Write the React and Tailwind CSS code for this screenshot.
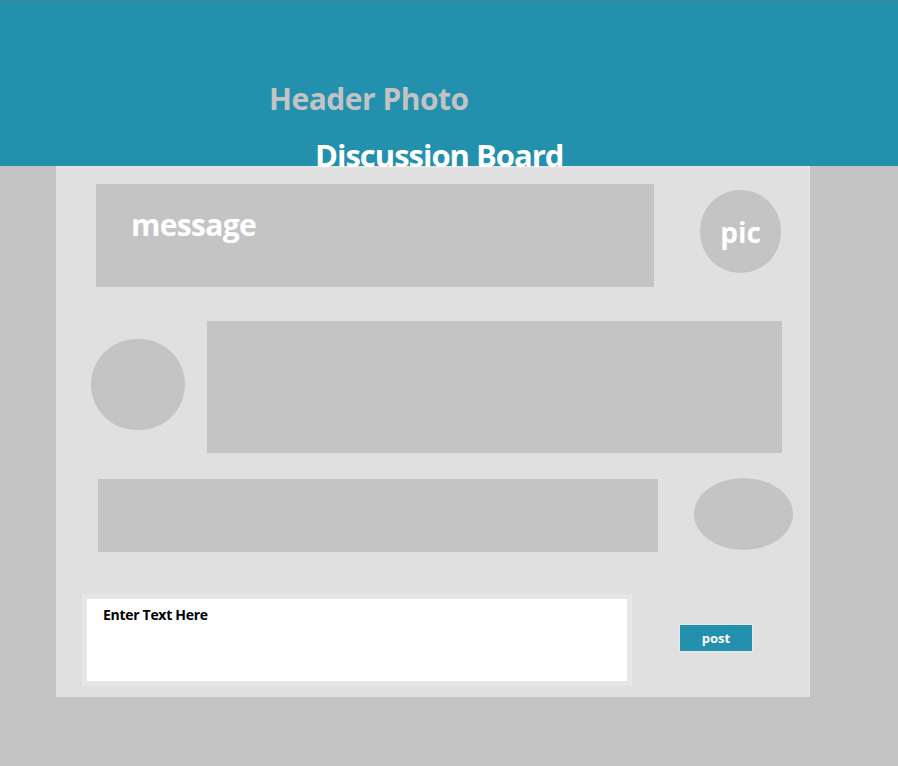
export default function App() {
  const font = { fontFamily: '"Open Sans", "Liberation Sans", sans-serif' };
  return (
    <div className="w-[898px] h-[766px] bg-[#c4c4c4] overflow-hidden" style={font}>
      <div className="h-[166px] bg-[#2391ae] border-t border-[#3f8598] pt-[83px]">
        <div className="ml-[269px] text-[30px] leading-none font-bold text-[#c3c3c3] tracking-[-0.5px]">
          Header Photo
        </div>
        <div className="ml-[315px] mt-[26px] text-[31px] leading-none font-bold text-white tracking-[-1px]">
          Discussion Board
        </div>
      </div>
      <div className="ml-[56px] w-[754px] h-[531px] bg-[#e0e0e0] border-t-2 border-r-2 border-[#e4e4e4] pt-[16px]">
        <div className="flex items-start">
          <div className="ml-[40px] w-[558px] h-[103px] bg-[#c4c4c4] pl-[35px] pt-[26px]">
            <div className="text-[30px] leading-none font-bold text-white tracking-[-0.7px]">message</div>
          </div>
          <div className="ml-[46px] mt-[6px] w-[81px] h-[83px] rounded-full bg-[#c4c4c4] flex items-center justify-center">
            <span className="text-[28px] leading-none font-bold text-white">pic</span>
          </div>
        </div>
        <div className="flex items-start mt-[34px]">
          <div className="ml-[35px] mt-[18px] w-[94px] h-[91px] rounded-full bg-[#c4c4c4]" />
          <div className="ml-[22px] w-[575px] h-[132px] bg-[#c4c4c4]" />
        </div>
        <div className="flex items-start mt-[26px]">
          <div className="ml-[42px] w-[560px] h-[73px] bg-[#c4c4c4]" />
          <div className="ml-[36px] -mt-[1px] w-[99px] h-[72px] rounded-[50%] bg-[#c4c4c4]" />
        </div>
        <div className="flex items-start mt-[42px]">
          <div className="ml-[26px] w-[550px] h-[92px] bg-[#e6e6e6] p-[5px]">
            <div className="w-full h-full bg-white pl-[16px] pt-[9px]">
              <div className="text-[14px] leading-none font-bold text-black tracking-[-0.3px]">Enter Text Here</div>
            </div>
          </div>
          <div className="ml-[48px] mt-[31px] w-[72px] h-[26px] bg-[#2391ae] flex items-center justify-center outline outline-1 outline-[#e8e8e8]">
            <span className="text-[13px] leading-none font-bold text-white">post</span>
          </div>
        </div>
      </div>
    </div>
  );
}
